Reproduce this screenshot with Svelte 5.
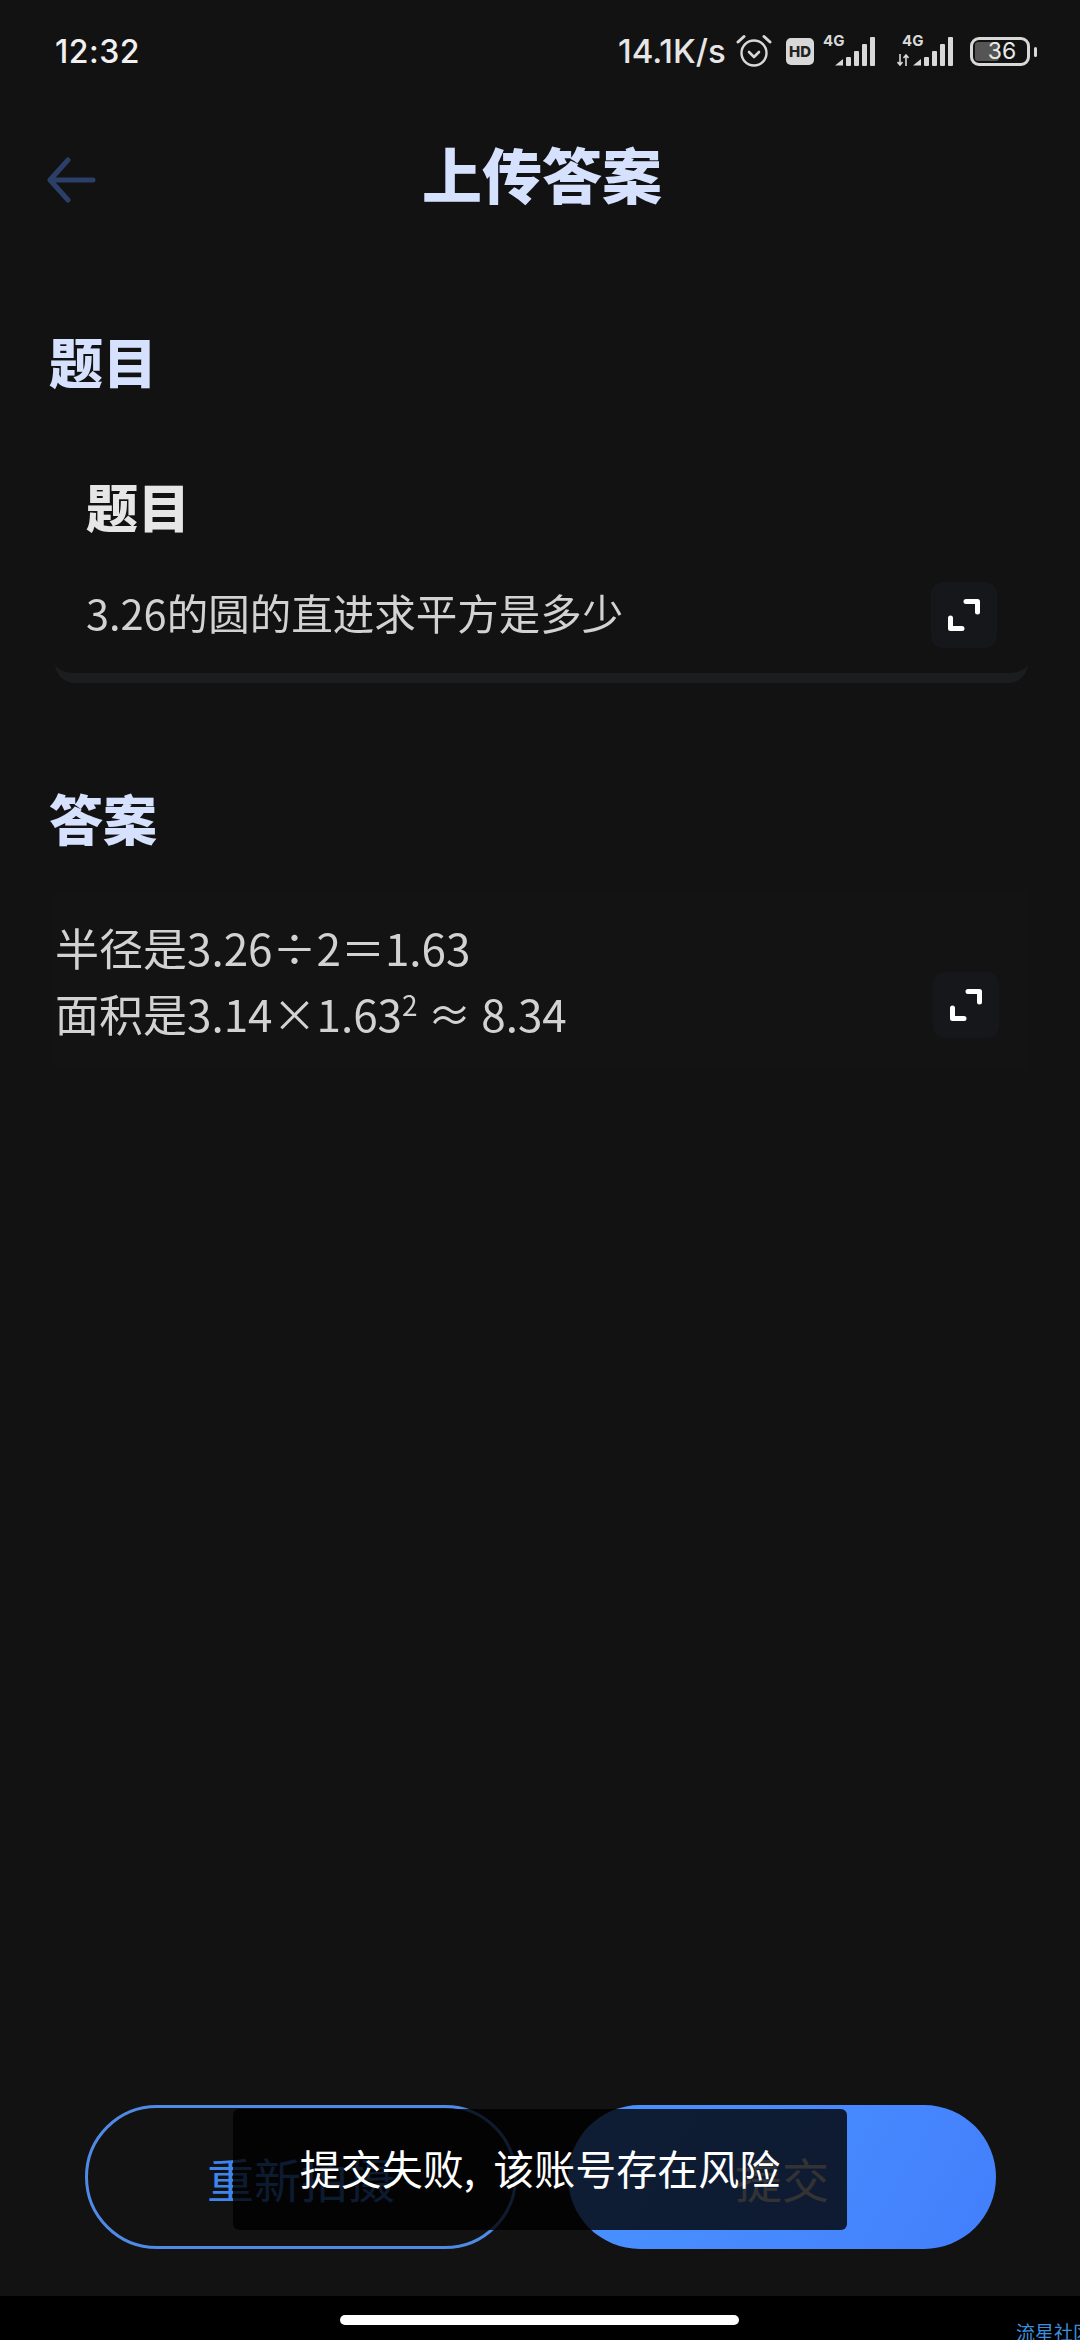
<script>
  const question = "3.26的圆的直进求平方是多少";
  const bars = [
    { x: 12, h: 9 },
    { x: 20, h: 15 },
    { x: 28, h: 22 },
    { x: 36, h: 29 },
  ];
</script>

{#snippet signal()}
  <svg class="signal" width="42" height="30" viewBox="0 0 42 30">
    <path d="M0 29.5 L8 23 V29.5 Z" fill="#d8d8d8" />
    {#each bars as b}
      <rect x={b.x - 1} y={30 - b.h} width="5" height={b.h} rx="1" fill="#d8d8d8" />
    {/each}
  </svg>
{/snippet}

{#snippet expand()}
  <button class="expand" aria-label="expand">
    <svg width="34" height="34" viewBox="0 0 34 34" fill="none" stroke="#fff" stroke-width="5" stroke-linecap="round" stroke-linejoin="round">
      <path d="M19 3.5 H30.5 V14" />
      <path d="M3.5 20 V30.5 H15" />
    </svg>
  </button>
{/snippet}

<div class="page">
  <div class="status">
    <span class="time">12:32</span>
    <div class="status-right">
      <span class="speed">14.1K/s</span>
      <svg class="alarm" width="36" height="34" viewBox="0 0 36 34" fill="none" stroke="#d8d8d8">
        <circle cx="18" cy="19" r="12.5" stroke-width="2.4" />
        <path d="M13 18 L18 23 L23 18" stroke-width="2.6" stroke-linecap="round" stroke-linejoin="round" />
        <path d="M2 8 L8 2.5" stroke-width="3" stroke-linecap="round" />
        <path d="M34 8 L28 2.5" stroke-width="3" stroke-linecap="round" />
      </svg>
      <span class="hd">HD</span>
      <div class="net first">
        <span class="g">4G</span>
        {@render signal()}
      </div>
      <div class="net second">
        <span class="g">4G</span>
        <svg class="arrows" width="12" height="12" viewBox="0 0 12 12" fill="none" stroke="#d8d8d8" stroke-width="1.6">
          <path d="M3 0 V11 M0.5 8 L3 11 L5.5 8" />
          <path d="M9 12 V1 M6.5 4 L9 1 L11.5 4" />
        </svg>
        {@render signal()}
      </div>
      <div class="battery">
        <div class="level"></div>
        <span>36</span>
        <i></i>
      </div>
    </div>
  </div>

  <header>
    <svg class="back" width="50" height="46" viewBox="0 0 50 46" fill="none" stroke="#2b3f69" stroke-width="5" stroke-linecap="round" stroke-linejoin="round">
      <path d="M46 23 H4 M21 3 L3 23 L21 43" />
    </svg>
    <h1>上传答案</h1>
  </header>

  <h2 class="first-head">题目</h2>
  <section class="card">
    <h3>题目</h3>
    <div class="row">
      <p class="soft">{question}</p>
      {@render expand()}
    </div>
  </section>

  <h2 class="answer-head">答案</h2>
  <section class="answer">
    <p class="soft">半径是3.26÷2＝1.63<br />面积是3.14×1.63<sup>2</sup> ≈ 8.34</p>
    {@render expand()}
  </section>

  <div class="actions">
    <button class="retake">重新拍摄</button>
    <button class="submit">提交</button>
  </div>

  <div class="nav">
    <div class="pill"></div>
    <span class="mark">流星社区</span>
  </div>

  <div class="toast">提交失败, 该账号存在风险</div>
</div>

<style>
  :global(body) {
    background: #121212;
  }

  .page {
    position: relative;
    width: 1080px;
    height: 2340px;
    overflow: hidden;
    display: flex;
    flex-direction: column;
    background: #121212;
    font-family: "Noto Sans CJK SC", "Noto Sans", sans-serif;
  }

  .status {
    height: 102px;
    flex: none;
    display: flex;
    justify-content: space-between;
    align-items: center;
    padding: 0 43px 0 55px;
    box-sizing: border-box;
    font-family: Inter, "Noto Sans", sans-serif;
  }

  .time {
    font-size: 32px;
    font-weight: 500;
    color: #f0f0f0;
    letter-spacing: 0.5px;
  }

  .status-right {
    display: flex;
    align-items: center;
  }

  .speed {
    font-size: 33px;
    font-weight: 500;
    color: #e6e6e6;
    width: 118px;
    white-space: nowrap;
  }

  .alarm {
    margin-right: 14px;
  }

  .hd {
    width: 28px;
    height: 27px;
    background: #d8d8d8;
    border-radius: 5px;
    color: #222;
    font-size: 15px;
    font-weight: 800;
    line-height: 27px;
    text-align: center;
    margin-right: 9px;
  }

  .net {
    position: relative;
    display: flex;
    justify-content: flex-end;
    align-items: flex-end;
    height: 30px;
  }

  .net.first {
    width: 54px;
    margin-right: 20px;
  }

  .net.second {
    width: 58px;
    margin-right: 15px;
  }

  .g {
    position: absolute;
    left: 0;
    top: -3px;
    font-size: 15px;
    font-weight: 700;
    color: #d8d8d8;
    line-height: 15px;
  }

  .second .g {
    left: 5px;
  }

  .arrows {
    position: absolute;
    left: 0;
    bottom: 0;
  }

  .battery {
    position: relative;
    width: 60px;
    height: 29px;
    box-sizing: border-box;
    border: 3px solid #d8d8d8;
    border-radius: 9px;
    display: flex;
    align-items: center;
    justify-content: center;
    margin-right: 7px;
  }

  .battery .level {
    position: absolute;
    left: 2px;
    top: 2px;
    bottom: 2px;
    width: 24px;
    background: #555;
    border-radius: 3px;
  }

  .battery span {
    position: relative;
    left: 2px;
    font-size: 23px;
    font-weight: 400;
    color: #e8e8e8;
  }

  .battery i {
    position: absolute;
    right: -10px;
    top: 7px;
    width: 3px;
    height: 10px;
    background: #d8d8d8;
    border-radius: 2px;
  }

  header {
    position: relative;
    height: 76px;
    margin-top: 33px;
    padding-left: 4px;
    flex: none;
    display: flex;
    align-items: center;
    justify-content: center;
  }

  .back {
    position: absolute;
    left: 47px;
    top: 22px;
  }

  h1 {
    margin: 0;
    font-size: 60px;
    font-weight: 900;
    line-height: 76px;
    color: #d6e1fd;
  }

  h2 {
    margin: 0 0 0 49px;
    font-size: 54px;
    font-weight: 900;
    line-height: 66px;
    color: #d6e1fd;
  }

  .first-head {
    margin-top: 117px;
  }

  .answer-head {
    margin-top: 102px;
  }

  .card {
    margin: 57px 52px 0 55px;
    height: 232px;
    flex: none;
    box-sizing: border-box;
    padding: 22px 31px 0 31px;
    border-radius: 0 0 20px 20px;
    border-bottom: 10px solid #1c1d1f;
    display: flex;
    flex-direction: column;
  }

  h3 {
    margin: 0;
    font-size: 52px;
    font-weight: 900;
    line-height: 66px;
    color: #e6e6e6;
  }

  .row {
    margin-top: 43px;
    display: flex;
    justify-content: space-between;
    align-items: center;
  }

  .soft {
    margin: 0 0 6px;
    color: #d2d2d2;
    font-size: 41.5px;
    filter: blur(0.5px);
  }

  .answer {
    margin: 39px 50px 0 52px;
    height: 180px;
    flex: none;
    box-sizing: border-box;
    padding: 0 31px 0 3px;
    background: #131314;
    border-radius: 8px;
    display: flex;
    justify-content: space-between;
    align-items: center;
  }

  .answer .soft {
    font-size: 44px;
    line-height: 66px;
    margin: 0;
  }

  sup {
    font-size: 28px;
    line-height: 0;
  }

  .expand {
    width: 66px;
    height: 66px;
    padding: 0;
    border: 0;
    border-radius: 12px;
    background: #15171b;
    display: flex;
    align-items: center;
    justify-content: center;
    flex: none;
  }

  .answer .expand {
    margin-top: 49px;
  }

  .actions {
    margin-top: auto;
    padding: 0 84px 0 85px;
    display: flex;
    justify-content: space-between;
    flex: none;
  }

  .actions button {
    height: 144px;
    border-radius: 72px;
    font-family: inherit;
    font-size: 47px;
    font-weight: 400;
    padding: 0;
  }

  .retake {
    width: 432px;
    box-sizing: border-box;
    background: transparent;
    border: 3.5px solid #4f8ae6;
    color: #3f86ea;
  }

  .submit {
    width: 428px;
    border: 0;
    background: linear-gradient(120deg, #4a94ff, #437ffc);
    color: #fff;
  }

  .nav {
    position: relative;
    margin-top: 47px;
    height: 44px;
    flex: none;
    background: #000;
  }

  .pill {
    position: absolute;
    left: 340px;
    top: 19px;
    width: 399px;
    height: 10px;
    border-radius: 5px;
    background: #fff;
  }

  .mark {
    position: absolute;
    left: 1016px;
    top: 23px;
    font-size: 19px;
    line-height: 26px;
    white-space: nowrap;
    color: #3c8fdc;
  }

  .toast {
    position: absolute;
    left: 233px;
    top: 2109px;
    width: 614px;
    height: 121px;
    border-radius: 6px;
    background: rgba(0, 0, 0, 0.8);
    color: #fff;
    font-size: 41px;
    line-height: 117px;
    word-spacing: 9px;
    text-align: center;
    white-space: nowrap;
  }
</style>
